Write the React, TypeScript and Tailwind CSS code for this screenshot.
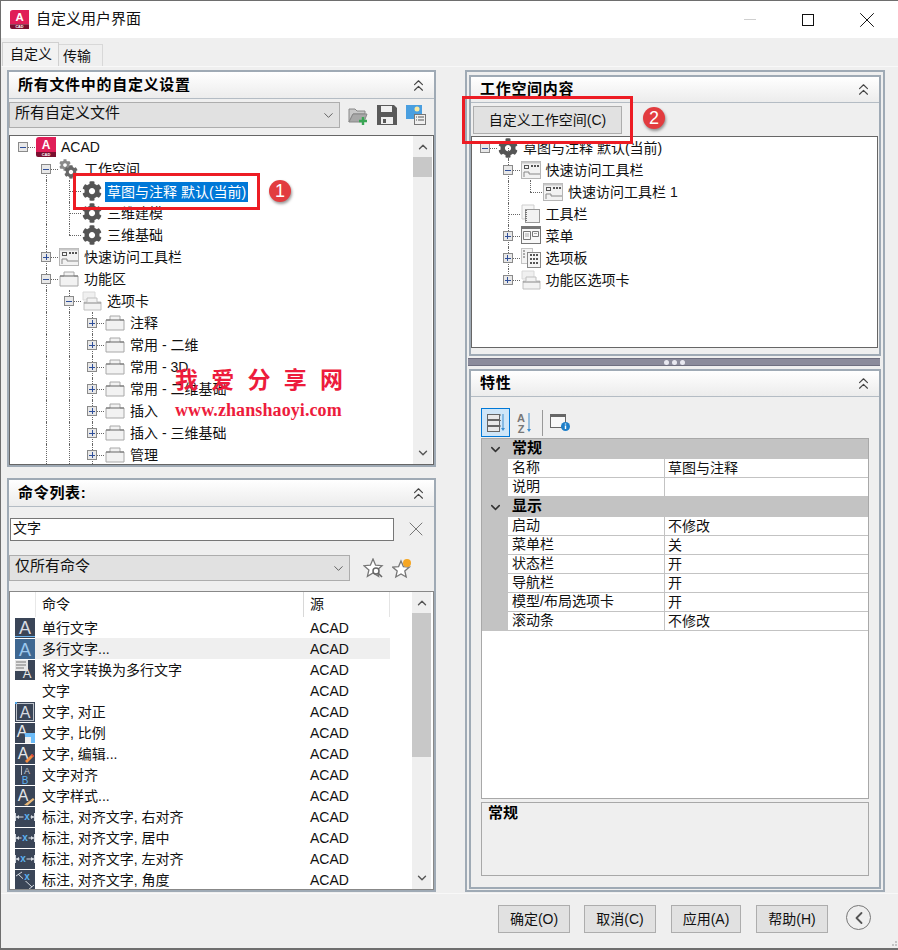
import { ChevronDown, ChevronLeft, ChevronUp, ChevronsUp, X } from "lucide-react";
import { FaCog } from "react-icons/fa";

const FONT = "[font-family:'Liberation_Sans','Noto_Sans_CJK_SC',sans-serif]";

type Row = {
  d: number;
  label: string;
  icon: string;
  box?: "+" | "-";
  full?: number[];
  upper?: number[];
  lower?: number[];
};

const leftTree: Row[] = [
  { d: 0, label: "ACAD", icon: "acad", box: "-" },
  { d: 1, label: "工作空间", icon: "gears", box: "-", lower: [1] },
  { d: 2, label: "草图与注释 默认(当前)", icon: "gear", full: [1, 2] },
  { d: 2, label: "三维建模", icon: "gear", full: [1, 2] },
  { d: 2, label: "三维基础", icon: "gear", full: [1], upper: [2] },
  { d: 1, label: "快速访问工具栏", icon: "qat", box: "+", full: [1] },
  { d: 1, label: "功能区", icon: "tab", box: "-", full: [1] },
  { d: 2, label: "选项卡", icon: "tabs", box: "-", full: [1, 2] },
  { d: 3, label: "注释", icon: "tab", box: "+", full: [1, 2, 3] },
  { d: 3, label: "常用 - 二维", icon: "tab", box: "+", full: [1, 2, 3] },
  { d: 3, label: "常用 - 3D", icon: "tab", box: "+", full: [1, 2, 3] },
  { d: 3, label: "常用 - 二维基础", icon: "tab", box: "+", full: [1, 2, 3] },
  { d: 3, label: "插入", icon: "tab", box: "+", full: [1, 2, 3] },
  { d: 3, label: "插入 - 三维基础", icon: "tab", box: "+", full: [1, 2, 3] },
  { d: 3, label: "管理", icon: "tab", box: "+", full: [1, 2, 3] },
];

const rightTree: Row[] = [
  { d: 0, label: "草图与注释 默认(当前)", icon: "gear", box: "-", lower: [1] },
  { d: 1, label: "快速访问工具栏", icon: "qat", box: "-", full: [1], lower: [2] },
  { d: 2, label: "快速访问工具栏 1", icon: "qat", full: [1], upper: [2] },
  { d: 1, label: "工具栏", icon: "toolbar", full: [1] },
  { d: 1, label: "菜单", icon: "menu", box: "+", full: [1] },
  { d: 1, label: "选项板", icon: "palette", box: "+", full: [1] },
  { d: 1, label: "功能区选项卡", icon: "tabs", box: "+", upper: [1] },
];

const commands = [
  ["a-under", "单行文字"],
  ["a-blue", "多行文字..."],
  ["convert", "将文字转换为多行文字"],
  ["none", "文字"],
  ["a-box", "文字, 对正"],
  ["a-scale", "文字, 比例"],
  ["a-edit", "文字, 编辑..."],
  ["ab", "文字对齐"],
  ["a-brush", "文字样式..."],
  ["dim-r", "标注, 对齐文字, 右对齐"],
  ["dim-c", "标注, 对齐文字, 居中"],
  ["dim-l", "标注, 对齐文字, 左对齐"],
  ["dim-a", "标注, 对齐文字, 角度"],
];

const AcadIcon = ({ size = 20 }: { size?: number }) => (
  <svg width={size} height={size} viewBox="0 0 20 20">
    <path d="M0 3 Q0 0 3 0 H20 V15 H0 Z" fill="#e01e58" />
    <path d="M0 15 H20 V20 H2 Q0 20 0 18 Z" fill="#7a1030" />
    <text x="10" y="12" fontSize="12" fontWeight="700" fill="#fff" textAnchor="middle" fontFamily="Liberation Sans">A</text>
    <text x="10" y="19" fontSize="4" fontWeight="700" fill="#fff" textAnchor="middle" fontFamily="Liberation Sans">CAD</text>
  </svg>
);

const TreeIcon = ({ kind }: { kind: string }) => {
  if (kind === "acad") return <AcadIcon />;
  if (kind === "gear") return <FaCog size={20} color="#555555" />;
  if (kind === "gears")
    return (
      <div className="relative w-[20px] h-[20px]">
        <FaCog size={12} color="#8a8a8a" className="absolute left-0 top-0" />
        <FaCog size={14} color="#666666" className="absolute right-[1px] bottom-0" />
      </div>
    );
  if (kind === "qat")
    return (
      <svg width="20" height="20" viewBox="0 0 20 20" fill="none">
        <rect x="0.5" y="1.5" width="19" height="17" fill="#f2f2f2" stroke="#b5b5b5" />
        <rect x="0.5" y="1.5" width="19" height="2" fill="#c8c8c8" />
        <rect x="3.5" y="5.5" width="4" height="3" stroke="#555" />
        <path d="M10 6h2M13 6h2M16 6h2" stroke="#555" strokeWidth="2" />
        <path d="M3 17v-5h5v2h11" stroke="#888" />
      </svg>
    );
  if (kind === "tab")
    return (
      <svg width="20" height="20" viewBox="0 0 20 20" fill="none">
        <path d="M1 7h4V3h10v4h4v10H1z" fill="#f2f2f2" stroke="#a8a8a8" />
        <path d="M1 7h18" stroke="#666" />
      </svg>
    );
  if (kind === "tabs")
    return (
      <svg width="20" height="20" viewBox="0 0 20 20" fill="none">
        <path d="M1 1h12v8H1z" fill="#f0f0f0" stroke="#d8d8d8" />
        <path d="M2 11h3V7h10v4h4v8H2z" fill="#f2f2f2" stroke="#c0c0c0" />
        <path d="M2 12h17" stroke="#888" />
      </svg>
    );
  if (kind === "toolbar")
    return (
      <svg width="20" height="20" viewBox="0 0 20 20" fill="none">
        <path d="M1 1h12v14H1z" fill="#f6f6f6" stroke="#cfcfcf" />
        <rect x="4.5" y="5.5" width="14" height="13" fill="#f2f2f2" stroke="#999" />
        <path d="M5 6v12" stroke="#777" strokeWidth="2" strokeDasharray="1 1" />
      </svg>
    );
  if (kind === "menu")
    return (
      <svg width="20" height="20" viewBox="0 0 20 20" fill="none">
        <rect x="0.5" y="0.5" width="19" height="17" fill="#f8f8f8" stroke="#777" />
        <rect x="1" y="1" width="18" height="2" fill="#777" />
        <path d="M2.5 5.5h7v8h-7zM11.5 5.5h6v5h-6z" stroke="#777" />
        <path d="M4 8h4M4 10h4M13 7.5h3" stroke="#aaa" />
      </svg>
    );
  return (
    <svg width="20" height="20" viewBox="0 0 20 20" fill="none">
      <rect x="0.5" y="0.5" width="11" height="15" fill="#f4f4f4" stroke="#c5c5c5" />
      <rect x="6.5" y="4.5" width="13" height="15" fill="#f4f4f4" stroke="#888" />
      <path d="M9 7h2M12 7h2M15 7h2M9 11h2M12 11h2M15 11h2M9 15h2M12 15h2M15 15h2" stroke="#555" strokeWidth="2" />
      <path d="M2 3h2M2 6h2M2 9h2" stroke="#aaa" strokeWidth="2" />
    </svg>
  );
};

const TreeRows = ({ rows, base, step }: { rows: Row[]; base: number; step: number }) => {
  const cx = (d: number) => base + step * d;
  return (
    <div>
      {rows.map((r, i) => (
        <div key={i} className="relative h-[22px] whitespace-nowrap">
          {(r.full || []).map((g) => (
            <span key={g} className="absolute top-0 bottom-0 border-l border-dotted border-[#666]" style={{ left: cx(g) }} />
          ))}
          {(r.upper || []).map((g) => (
            <span key={g} className="absolute top-0 h-[11px] border-l border-dotted border-[#666]" style={{ left: cx(g) }} />
          ))}
          {(r.lower || []).map((g) => (
            <span key={g} className="absolute top-[11px] bottom-0 border-l border-dotted border-[#666]" style={{ left: cx(g) }} />
          ))}
          <span className="absolute top-[11px] w-[12px] border-t border-dotted border-[#666]" style={{ left: cx(r.d) }} />
          {r.box && (
            <span
              className="absolute top-[6px] w-[10px] h-[10px] border border-[#8a8a8a] bg-[#e8e8e8] flex items-center justify-center"
              style={{ left: cx(r.d) - 5 }}
            >
              <span className="absolute w-[6px] h-px bg-[#2f4f9a]" />
              {r.box === "+" && <span className="absolute w-px h-[6px] bg-[#2f4f9a]" />}
            </span>
          )}
          <span className="absolute top-[1px]" style={{ left: cx(r.d) + 13 }}>
            <TreeIcon kind={r.icon} />
          </span>
          <span
            className={`absolute top-0 h-[22px] leading-[22px] text-[14px] ${
              r.label === "草图与注释 默认(当前)" && r.box === undefined
                ? "bg-[#0078d7] text-white !top-[2px] !h-[20px] !leading-[20px] px-[2px] -ml-[2px]"
                : "text-[#111]"
            }`}
            style={{ left: cx(r.d) + 38 }}
          >
            {r.label}
          </span>
        </div>
      ))}
    </div>
  );
};

const Header = ({ title, h = 27 }: { title: string; h?: number }) => (
  <div
    className="flex items-center justify-between pl-[9px] pr-[6px] bg-gradient-to-b from-white to-[#ececec] border-b border-[#b4bcc4] shrink-0"
    style={{ height: h }}
  >
    <span className="text-[15px] tracking-[0.7px] font-bold text-black">{title}</span>
    <ChevronsUp size={19} strokeWidth={1.4} color="#444" />
  </div>
);

const Combo = ({ text, w }: { text: string; w: number }) => (
  <div
    className="h-[26px] bg-[#e1e1e1] border border-[#adadad] flex items-start justify-between pl-[5px] pr-[3px] text-[15px] leading-[20px] text-[#111]"
    style={{ width: w }}
  >
    <span>{text}</span>
    <ChevronDown size={15} strokeWidth={1.3} color="#444" className="mt-[5px]" />
  </div>
);

const Scrollbar = ({ top, thumb }: { top: number; thumb: number }) => (
  <div className="w-[19px] h-full bg-[#efefef] relative shrink-0">
    <ChevronUp size={14} strokeWidth={2.4} color="#555" className="absolute left-[3px] top-[4px]" />
    <div className="absolute inset-x-0 bg-[#c8c8c8]" style={{ top, height: thumb }} />
    <ChevronDown size={14} strokeWidth={2.4} color="#555" className="absolute left-[3px] bottom-[4px]" />
  </div>
);

const CmdIcon = ({ kind }: { kind: string }) => {
  if (kind === "none") return <div className="w-[20px] h-[20px]" />;
  const bg = kind === "a-blue" ? "#3e6791" : "#3a4557";
  const A = (x: number, y: number, s: number, fill: string) => (
    <text x={x} y={y} fontSize={s} fill={fill} textAnchor="middle" fontFamily="Liberation Sans">
      A
    </text>
  );
  const xPos = kind === "dim-r" ? 12 : kind === "dim-c" ? 10 : 8;
  return (
    <svg width="20" height="20" viewBox="0 0 20 20" fill="none">
      <rect width="20" height="20" fill={bg} />
      {kind === "a-under" && (
        <>
          {A(10, 16, 18, "#d6dbe2")}
          <rect y="18" width="20" height="1" fill="#6fb6f0" />
        </>
      )}
      {kind === "a-blue" && A(10, 17, 18, "#9cc8ee")}
      {kind === "convert" && (
        <>
          <rect x="0" y="0" width="13" height="11" fill="#e8e8e8" />
          <path d="M1 2h10M1 5h10M1 8h8" stroke="#777" />
          {A(12, 18, 13, "#e8e8e8")}
        </>
      )}
      {kind === "a-box" && (
        <>
          <rect x="1.5" y="1.5" width="17" height="17" stroke="#bfc4cc" />
          {A(10, 16, 16, "#d6dbe2")}
          <rect width="2" height="2" fill="#4ea6ea" />
        </>
      )}
      {kind === "a-scale" && (
        <>
          {A(7, 14, 16, "#e4e7ea")}
          <rect x="10" y="10" width="10" height="10" fill="#6dbcf8" />
          <rect x="10" y="14" width="6" height="6" fill="#eee" />
        </>
      )}
      {kind === "a-edit" && (
        <>
          {A(8, 15, 16, "#e4e7ea")}
          <path d="M10 17l7-7 2 2-7 7z" fill="#f08a40" />
          <path d="M16 11l1-1 2 2-1 1z" fill="#e03c3c" />
        </>
      )}
      {kind === "ab" && (
        <>
          <path d="M6.5 1v9" stroke="#c0c4ca" />
          <text x="12" y="9" fontSize="9" fill="#c9ced6" textAnchor="middle" fontFamily="Liberation Sans">A</text>
          <text x="10" y="19" fontSize="10" fill="#5cb0f0" textAnchor="middle" fontFamily="Liberation Sans">B</text>
        </>
      )}
      {kind === "a-brush" && (
        <>
          {A(8, 15, 16, "#e4e7ea")}
          <path d="M9 19l9-7 1.5 1.5-7 6z" fill="#e8b878" />
        </>
      )}
      {kind.startsWith("dim-") && kind !== "dim-a" && (
        <>
          <path d="M0.5 6v8M19.5 6v8M1 10h18" stroke="#d6dbe2" />
          <path d="M1 10l3-2v4zM19 10l-3-2v4z" fill="#d6dbe2" />
          <rect x={xPos - 3.5} y="6" width="7" height="8" fill={bg} />
          <text x={xPos} y="13" fontSize="10" fontWeight="700" fill="#5cb0f0" textAnchor="middle" fontFamily="Liberation Sans">
            x
          </text>
        </>
      )}
      {kind === "dim-a" && (
        <>
          <path d="M1 6l6-4M3 4l14 13M13 20l6-5" stroke="#d6dbe2" />
          <rect x="8" y="2" width="8" height="9" fill={bg} />
          <text x="12" y="10" fontSize="10" fontWeight="700" fill="#5cb0f0" textAnchor="middle" fontFamily="Liberation Sans">
            x
          </text>
        </>
      )}
    </svg>
  );
};

const Btn = ({ label, w, className = "" }: { label: string; w: number; className?: string }) => (
  <button
    className={`h-[28px] bg-[#e1e1e1] border border-[#adadad] text-[14px] text-[#111] shrink-0 ${className}`}
    style={{ width: w }}
  >
    {label}
  </button>
);

const PropRow = ({ name, value }: { name: string; value: string }) => (
  <div className="flex h-[19px] border-b border-[#c3c3c3] bg-white text-[14px] leading-[17px] text-[#111]">
    <div className="w-[26px] bg-[#c3c3c3] shrink-0" />
    <div className="w-[157px] pl-[4px] border-r border-[#c3c3c3] shrink-0">{name}</div>
    <div className="pl-[3px] pt-px">{value}</div>
  </div>
);

const Category = ({ title }: { title: string }) => (
  <div className="flex items-center h-[20px] bg-[#c3c3c3] text-[15px] font-bold text-black">
    <div className="w-[26px] flex justify-center">
      <ChevronDown size={15} strokeWidth={2.4} color="#333" />
    </div>
    <span className="pl-[4px] pb-[2px]">{title}</span>
  </div>
);

const Badge = ({ n, x, y }: { n: number; x: number; y: number }) => (
  <div
    className="absolute w-[22px] h-[22px] rounded-full bg-[#e23c3f] text-white text-[18px] flex items-center justify-center shadow-[1px_2px_3px_rgba(0,0,0,0.4)]"
    style={{ left: x, top: y }}
  >
    {n}
  </div>
);

export default function App() {
  return (
    <div className={`${FONT} relative w-[898px] h-[950px] bg-[#efefef] border-l border-t border-b-2 border-[#6e6e6e] overflow-hidden`}>
      {/* Title bar */}
      <div className="h-[37px] bg-white flex items-center pl-[9px] pr-[18px]">
        <AcadIcon size={19} />
        <span className="ml-[7px] text-[15px] text-[#111]">自定义用户界面</span>
        <div className="ml-auto flex items-center">
          <span className="w-[12px] h-px bg-[#cfcfcf]" />
          <span className="ml-[46px] w-[12px] h-[12px] border border-[#111]" />
          <X size={26} strokeWidth={0.9} color="#111" className="ml-[40px]" />
        </div>
      </div>

      {/* Tabs */}
      <div className="h-[28px] pt-[4px] pl-[1px] flex items-end">
        <div className="w-[57px] h-[24px] border border-b-0 border-[#d0d0d0] bg-[#f2f2f2] text-[14px] leading-[22px] pl-[7px] text-[#111]">
          自定义
        </div>
        <div className="w-[44px] h-[22px] border border-l-0 border-b-0 border-[#d8d8d8] text-[14px] leading-[22px] pl-[4px] text-[#111]">
          传输
        </div>
      </div>

      {/* Main */}
      <div className="h-[827px] border-t border-[#f8f8f8] pt-[3px] pl-[6px] flex">
        <div className="w-[429px] shrink-0">
          {/* Customizations in all files */}
          <div className="h-[397px] border-2 border-[#9faab5] flex flex-col">
            <Header title="所有文件中的自定义设置" />
            <div className="mt-[3px] flex items-center">
              <Combo text="所有自定义文件" w={331} />
              <svg width="20" height="20" viewBox="0 0 20 20" fill="none" className="ml-[8px]">
                <path d="M1 4h6l2 2h8v3H5L1 17z" fill="#c8c8c8" stroke="#888" />
                <path d="M5 9h14l-3 8H1z" fill="#a8a8a8" stroke="#888" />
                <path d="M15 12v8M11 16h8" stroke="#3aa655" strokeWidth="2.4" />
              </svg>
              <svg width="20" height="20" viewBox="0 0 20 20" className="ml-[9px]">
                <path d="M0 0h17l3 3v17H0z" fill="#5a5a5a" />
                <rect x="4" y="1" width="11" height="6" fill="#f0f0f0" />
                <rect x="4" y="12" width="12" height="7" fill="#f0f0f0" />
                <rect x="6" y="14" width="3" height="4" fill="#5a5a5a" />
              </svg>
              <svg width="20" height="20" viewBox="0 0 20 20" className="ml-[9px]">
                <rect width="16" height="14" fill="#4a9fe0" />
                <circle cx="11" cy="4" r="2.5" fill="#fbe9a0" />
                <rect x="8.5" y="9.5" width="11" height="10" fill="#f0f0f0" stroke="#777" />
                <path d="M10 12h1M12 12h6M10 15h1M12 15h6" stroke="#555" />
              </svg>
            </div>
            <div className="mt-[7px] h-[330px] border border-[#666] bg-white flex overflow-hidden">
              <div className="flex-1 overflow-hidden">
                <TreeRows rows={leftTree} base={13} step={23} />
              </div>
              <Scrollbar top={21} thumb={20} />
              <div className="w-px" />
            </div>
          </div>

          {/* Command list */}
          <div className="mt-[11px] h-[414px] border-2 border-[#9faab5] flex flex-col">
            <Header title="命令列表:" />
            <div className="mt-[10px] ml-[1px] flex items-center">
              <div className="w-[384px] h-[23px] border border-[#777] bg-white text-[14px] leading-[19px] pl-[2px] text-[#111]">
                文字
              </div>
              <X size={24} strokeWidth={1} color="#777" className="ml-[10px]" />
            </div>
            <div className="mt-[14px] flex items-center">
              <Combo text="仅所有命令" w={341} />
              <svg width="21" height="21" viewBox="0 0 21 21" fill="none" className="ml-[13px]">
                <path d="M10 1l2.6 6.2 6.4.5-4.9 4.2 1.5 6.4L10 15l-5.6 3.3 1.5-6.4L1 7.7l6.4-.5z" stroke="#777" strokeWidth="1.3" fill="#fff" />
                <circle cx="13" cy="13" r="3" stroke="#666" strokeWidth="1.5" fill="#fff" />
                <path d="M15 15l4 4" stroke="#666" strokeWidth="1.6" />
              </svg>
              <svg width="21" height="21" viewBox="0 0 21 21" fill="none" className="ml-[8px]">
                <path d="M9 3l2.4 5.6 6 .5-4.6 3.9 1.4 6L9 16l-5.2 3 1.4-6L.6 9.1l6-.5z" stroke="#777" strokeWidth="1.3" fill="#fff" />
                <circle cx="15" cy="5" r="4" fill="#f5a623" />
              </svg>
            </div>
            <div className="mt-[10px] h-[299px] border border-[#888] bg-white flex overflow-hidden">
              <div className="w-[402px] shrink-0">
                <div className="h-[25px] flex text-[14px] leading-[25px] text-[#111]">
                  <div className="w-[26px] border-r border-[#e8e8e8]" />
                  <div className="w-[268px] pl-[6px] border-r border-[#d8d8d8]">命令</div>
                  <div className="w-[86px] pl-[6px] border-r border-[#e4e4e4]">源</div>
                </div>
                {commands.map(([kind, label], i) => (
                  <div key={label} className="h-[21px] flex items-center text-[14px] text-[#111]">
                    <div className="w-[25px] pl-[5px] shrink-0">
                      <CmdIcon kind={kind} />
                    </div>
                    <div className={`w-[355px] flex h-[21px] leading-[22px] pl-[7px] ${i === 1 ? "bg-[#efefef]" : ""}`}>
                      <span className="w-[268px]">{label}</span>
                      <span>ACAD</span>
                    </div>
                  </div>
                ))}
              </div>
              <Scrollbar top={21} thumb={144} />
            </div>
          </div>
        </div>

        {/* Right column */}
        <div className="ml-[29px] w-[420px] h-[822px] border-2 border-[#9faab5] pt-[3px] pl-[2px] shrink-0">
          {/* Workspace contents */}
          <div className="w-[412px] h-[281px] border-2 border-[#9faab5] flex flex-col">
            <Header title="工作空间内容" h={26} />
            <Btn label="自定义工作空间(C)" w={149} className="mt-[3px] ml-[2px]" />
            <div className="mt-[2px] h-[212px] w-[407px] border border-[#666] bg-white overflow-hidden">
              <TreeRows rows={rightTree} base={13} step={22.5} />
            </div>
          </div>

          {/* Splitter */}
          <div className="mt-[2px] -ml-[1px] w-[412px] h-[8px] bg-[#8b8b9b] border-y border-[#6f6f80] flex items-center justify-center gap-[3px]">
            <span className="w-[5px] h-[5px] rounded-full bg-[#e8e8f0]" />
            <span className="w-[5px] h-[5px] rounded-full bg-[#e8e8f0]" />
            <span className="w-[5px] h-[5px] rounded-full bg-[#e8e8f0]" />
          </div>

          {/* Properties */}
          <div className="mt-[3px] w-[412px] h-[520px] border-2 border-[#9faab5] flex flex-col">
            <Header title="特性" h={26} />
            <div className="mt-[11px] ml-[10px] h-[29px] flex items-center">
              <div className="w-[29px] h-[29px] bg-[#cfe6f8] border border-[#0078d7] flex items-center justify-center">
                <svg width="20" height="20" viewBox="0 0 20 20" fill="none">
                  <path d="M4 2h11M4 7.5h11M4 13h11" stroke="#666" />
                  <rect x="1.5" y="1.5" width="12" height="5" fill="#e8e8e8" stroke="#666" />
                  <rect x="1.5" y="7.5" width="12" height="5" fill="#e8e8e8" stroke="#666" />
                  <rect x="1.5" y="13.5" width="12" height="5" fill="#e8e8e8" stroke="#666" />
                  <path d="M17 1v15" stroke="#3a8dd0" />
                  <path d="M15 15h4l-2 3z" fill="#3a8dd0" />
                </svg>
              </div>
              <svg width="17" height="22" viewBox="0 0 17 22" fill="none" className="ml-[6px]">
                <text x="5" y="10" fontSize="11" fontWeight="700" fill="#777" textAnchor="middle" fontFamily="Liberation Sans">A</text>
                <text x="5" y="21" fontSize="11" fontWeight="700" fill="#777" textAnchor="middle" fontFamily="Liberation Sans">Z</text>
                <path d="M13 1v17" stroke="#3a8dd0" />
                <path d="M11 17h4l-2 3z" fill="#3a8dd0" />
              </svg>
              <span className="ml-[9px] w-px h-[26px] bg-[#999]" />
              <svg width="21" height="20" viewBox="0 0 21 20" fill="none" className="ml-[7px]">
                <rect x="0.5" y="1.5" width="15" height="13" fill="#f8f8f8" stroke="#666" />
                <rect x="1" y="2" width="14" height="2" fill="#666" />
                <circle cx="15.5" cy="13.5" r="4.5" fill="#1e7fc9" />
                <path d="M15.5 12.5v3.5M15.5 10.5v1" stroke="#fff" strokeWidth="1.4" />
              </svg>
            </div>
            <div className="mt-px ml-[10px] w-[388px] h-[361px] border border-[#a8a8a8] bg-white">
              <Category title="常规" />
              <PropRow name="名称" value="草图与注释" />
              <PropRow name="说明" value="" />
              <Category title="显示" />
              <PropRow name="启动" value="不修改" />
              <PropRow name="菜单栏" value="关" />
              <PropRow name="状态栏" value="开" />
              <PropRow name="导航栏" value="开" />
              <PropRow name="模型/布局选项卡" value="开" />
              <PropRow name="滚动条" value="不修改" />
            </div>
            <div className="mt-[3px] ml-[10px] w-[388px] h-[74px] border border-[#a8a8a8] pl-[6px] text-[15px] font-bold leading-[20px] text-black">
              常规
            </div>
          </div>
        </div>
      </div>

      {/* Footer */}
      <div className="h-[55px] border-t border-[#f8f8f8] pt-[11px] pl-[497px] flex items-start">
        <Btn label="确定(O)" w={72} />
        <div className="w-[14px] shrink-0" />
        <Btn label="取消(C)" w={72} />
        <div className="w-[15px] shrink-0" />
        <Btn label="应用(A)" w={70} />
        <div className="w-[15px] shrink-0" />
        <Btn label="帮助(H)" w={72} />
        <div className="ml-[18px] w-[25px] h-[25px] rounded-full border border-[#777] flex items-center justify-center shrink-0">
          <ChevronLeft size={20} strokeWidth={2.2} color="#555" />
        </div>
      </div>

      {/* Resize grip */}
      <svg width="8" height="8" viewBox="0 0 8 8" className="absolute right-0 bottom-0">
        <path d="M5 1h2v2H5zM2 4h2v2H2zM5 4h2v2H5z" fill="#c4c4c4" />
      </svg>

      {/* Annotations */}
      <div className="absolute left-[72px] top-[172px] w-[187px] h-[37px] border-[3px] border-[#ed1c24]" />
      <Badge n={1} x={268} y={179} />
      <div className="absolute left-[461px] top-[95px] w-[171px] h-[48px] border-[3px] border-[#ed1c24]" />
      <Badge n={2} x={642} y={106} />
      <div className="absolute left-[174px] top-[366px] w-[168px] flex justify-between text-[23px] font-bold text-[#ed1c3c] leading-[26px]">
        <span>我</span>
        <span>爱</span>
        <span>分</span>
        <span>享</span>
        <span>网</span>
      </div>
      <div className="absolute left-[174px] top-[399px] text-[18px] tracking-[0.1px] font-bold text-[#ed1c3c] [font-family:'Liberation_Serif',serif] leading-[20px]">
        www.zhanshaoyi.com
      </div>
    </div>
  );
}
